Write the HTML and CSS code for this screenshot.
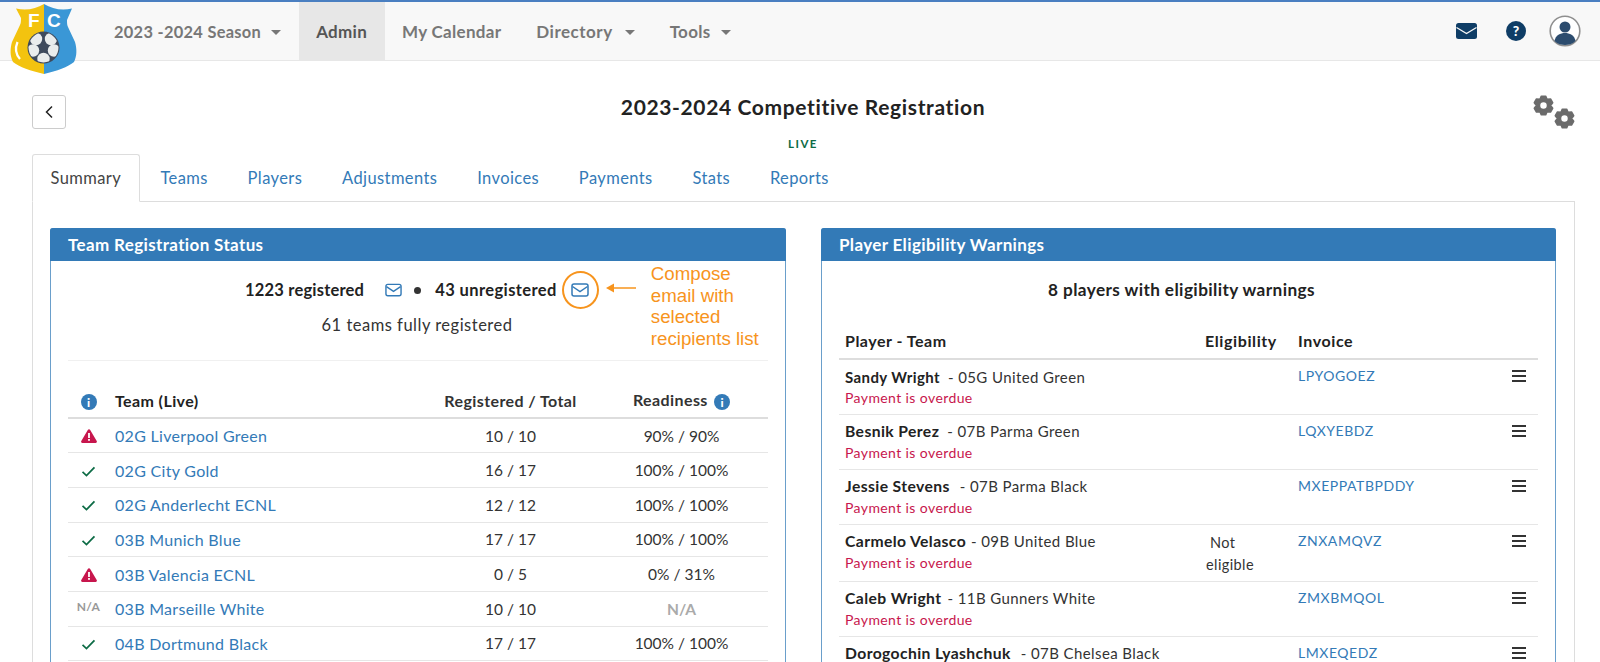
FILE: index.html
```html
<!DOCTYPE html>
<html lang="en">
<head>
<meta charset="utf-8">
<title>2023-2024 Competitive Registration</title>
<link rel="stylesheet" href="styles.css">
</head>
<body>
<svg class="defs" width="0" height="0" aria-hidden="true">
  <symbol id="env" viewBox="0 0 18 14"><rect x="1" y="1" width="16" height="12" rx="2" fill="none" stroke="currentColor" stroke-width="1.5"/><path d="M1.5 3.5 9 8.5l7.500-5" fill="none" stroke="currentColor" stroke-width="1.500"/></symbol>
  <symbol id="chk" viewBox="0 0 16 12"><path d="M1.500 6.500 5.800 10.500 14.500 1.500" fill="none" stroke="currentColor" stroke-width="1.900"/></symbol>
  <symbol id="warn" viewBox="0 0 16 14"><path d="M8 0.300c.5 0 .9.300 1.200.8l6.500 11c.5.800 0 1.800-1 1.800H1.300c-1 0-1.500-1-1-1.800l6.500-11c.3-.5.700-.8 1.200-.8z" fill="#c7164d"/><rect x="7.100" y="4" width="1.800" height="5" fill="#fff"/><rect x="7.100" y="10" width="1.800" height="1.800" fill="#fff"/></symbol>
  <symbol id="gear" viewBox="-11.500 -11.500 23 23"><path fill="currentColor" stroke="currentColor" stroke-width="1.700" stroke-linejoin="round" fill-rule="evenodd" d="M-2.360-10.230H2.360L3.900-6.750 7.680-7.160 10.040-3.070 7.800 0 10.040 3.070 7.680 7.160 3.900 6.750 2.360 10.230H-2.360L-3.900 6.750-7.680 7.160-10.040 3.070-7.800 0-10.040-3.070-7.680-7.160-3.900-6.750zM0-4.400a4.400 4.400 0 1 0 0 8.800 4.400 4.400 0 0 0 0-8.800z"/></symbol>
  <clipPath id="ball"><circle cx="43.500" cy="47.500" r="15"/></clipPath>
</svg>

<header class="navbar">
  <svg class="logo" viewBox="8 2 72 74" aria-hidden="true">
    <path d="M44 4C36 9 26 11 16 8.500L21 18c0 3 0 5-1 7l-8 17c-2 7-2 14 1 20 6 5 18 9 31 12z" fill="#f3c30f"/>
    <path d="M44 4C52 9 62 11 72 8.500L67 20c0 3 0 5 1 7l7 15c2 7 2 14-1 20-6 5-17 9-30 12z" fill="#3a97d6"/>
    <circle cx="43.500" cy="47.500" r="16" fill="#3e4a5c"/>
    <g clip-path="url(#ball)" fill="#e9ecec">
      <circle cx="36" cy="39" r="6.200"/>
      <circle cx="51" cy="39" r="6.200"/>
      <circle cx="33" cy="50.500" r="6.200"/>
      <circle cx="54" cy="50.500" r="6.200"/>
      <circle cx="43.500" cy="59" r="6.200"/>
    </g>
    <path d="M17.500 42c-2.500 6-2 12 2.500 17" fill="none" stroke="#fff" stroke-width="2.300"/>
    <text x="28" y="27" class="logo-letter">F</text>
    <text x="47" y="27" class="logo-letter">C</text>
  </svg>
  <nav class="nav-main">
    <a class="nav-item nav-season">2023 -2024 Season<i class="caret"></i></a>
    <a class="nav-item active">Admin</a>
    <a class="nav-item">My Calendar</a>
    <a class="nav-item nav-dir">Directory<i class="caret"></i></a>
    <a class="nav-item">Tools<i class="caret"></i></a>
  </nav>
  <div class="nav-icons">
    <svg class="ico-mail" viewBox="0 0 21 16" aria-hidden="true"><rect width="21" height="16" rx="2.500" fill="#0f3d66"/><path d="M0.500 4.500 10.500 10.500 20.500 4.500" fill="none" stroke="#f8f8f8" stroke-width="1.300"/></svg>
    <span class="ico-help">?</span>
    <svg class="ico-user" viewBox="0 0 32 32" aria-hidden="true"><circle cx="16" cy="16" r="14.800" fill="#fff" stroke="#8f8f8f" stroke-width="1.600"/><circle cx="16" cy="12" r="5.500" fill="#2c4c6e"/><path d="M5.500 26c1-6 6-8 10.500-8s9.500 2 10.500 8c-3 3-7 4-10.500 4s-7.500-1-10.500-4z" fill="#2c4c6e"/></svg>
  </div>
</header>

<main class="page">
  <div class="title-row">
    <button class="back" aria-label="Back"><svg viewBox="0 0 10 14" aria-hidden="true"><path d="M8 1.500 2.500 7 8 12.500" fill="none" stroke="#222" stroke-width="1.500"/></svg></button>
    <div class="title-block">
      <h1>2023-2024 Competitive Registration</h1>
      <div class="live">LIVE</div>
    </div>
    <div class="gears" aria-hidden="true">
      <svg class="gear-a"><use href="#gear"/></svg>
      <svg class="gear-b"><use href="#gear"/></svg>
    </div>
  </div>

  <div class="tabs">
    <a class="tab active">Summary</a>
    <a class="tab">Teams</a>
    <a class="tab">Players</a>
    <a class="tab">Adjustments</a>
    <a class="tab">Invoices</a>
    <a class="tab">Payments</a>
    <a class="tab">Stats</a>
    <a class="tab">Reports</a>
  </div>

  <div class="tab-body">
    <section class="panel">
      <h2 class="panel-head">Team Registration Status</h2>
      <div class="panel-body">
        <div class="reg-summary">
          <div class="reg-line">
            <b class="reg-first">1223 registered</b>
            <svg class="env env-a"><use href="#env"/></svg>
            <i class="dot"></i>
            <b>43 unregistered</b>
            <span class="env-ring"><svg class="env"><use href="#env"/></svg>
              <span class="callout">
                <svg class="arrow" viewBox="0 0 30 10" aria-hidden="true"><path d="M30 5H6" stroke="#f7941d" stroke-width="1.500"/><path d="M0 5l8-4.500v9z" fill="#f7941d"/></svg>
                <span class="callout-text">Compose<br>email with<br>selected<br>recipients list</span>
              </span>
            </span>
          </div>
          <div class="reg-sub">61 teams fully registered</div>
        </div>
        <table class="grid teams">
          <thead>
            <tr><th class="c-icon"><span class="info">i</span></th><th>Team (Live)</th><th class="ctr">Registered / Total</th><th class="ctr">Readiness <span class="info info-sm">i</span></th></tr>
          </thead>
          <tbody>
            <tr><td class="c-icon"><svg class="warn"><use href="#warn"/></svg></td><td><a>02G Liverpool Green</a></td><td class="ctr">10 / 10</td><td class="ctr">90% / 90%</td></tr>
            <tr><td class="c-icon"><svg class="chk"><use href="#chk"/></svg></td><td><a>02G City Gold</a></td><td class="ctr">16 / 17</td><td class="ctr">100% / 100%</td></tr>
            <tr><td class="c-icon"><svg class="chk"><use href="#chk"/></svg></td><td><a>02G Anderlecht ECNL</a></td><td class="ctr">12 / 12</td><td class="ctr">100% / 100%</td></tr>
            <tr><td class="c-icon"><svg class="chk"><use href="#chk"/></svg></td><td><a>03B Munich Blue</a></td><td class="ctr">17 / 17</td><td class="ctr">100% / 100%</td></tr>
            <tr><td class="c-icon"><svg class="warn"><use href="#warn"/></svg></td><td><a>03B Valencia ECNL</a></td><td class="ctr">0 / 5</td><td class="ctr">0% / 31%</td></tr>
            <tr><td class="c-icon na">N/A</td><td><a>03B Marseille White</a></td><td class="ctr">10 / 10</td><td class="ctr na-b">N/A</td></tr>
            <tr><td class="c-icon"><svg class="chk"><use href="#chk"/></svg></td><td><a>04B Dortmund Black</a></td><td class="ctr">17 / 17</td><td class="ctr">100% / 100%</td></tr>
          </tbody>
        </table>
      </div>
    </section>

    <section class="panel">
      <h2 class="panel-head">Player Eligibility Warnings</h2>
      <div class="panel-body">
        <div class="warn-summary">8 players with eligibility warnings</div>
        <table class="grid players">
          <thead>
            <tr><th class="c-player">Player - Team</th><th class="c-elig">Eligibility</th><th class="c-inv">Invoice</th><th class="c-menu"></th></tr>
          </thead>
          <tbody>
            <tr><td class="who"><b class="tight">Sandy Wright</b><span class="t">- 05G United Green</span><div class="overdue">Payment is overdue</div></td><td></td><td><a>LPYOGOEZ</a></td><td class="c-menu"><i class="bars"></i></td></tr>
            <tr><td class="who"><b>Besnik Perez</b><span class="t">- 07B Parma Green</span><div class="overdue">Payment is overdue</div></td><td></td><td><a>LQXYEBDZ</a></td><td class="c-menu"><i class="bars"></i></td></tr>
            <tr><td class="who"><b>Jessie Stevens</b><span class="t t10">- 07B Parma Black</span><div class="overdue">Payment is overdue</div></td><td></td><td><a>MXEPPATBPDDY</a></td><td class="c-menu"><i class="bars"></i></td></tr>
            <tr class="row-tall"><td class="who"><b>Carmelo Velasco</b><span class="t t5">- 09B United Blue</span><div class="overdue">Payment is overdue</div></td><td class="not-elig"><span class="not">Not</span><br>eligible</td><td><a>ZNXAMQVZ</a></td><td class="c-menu"><i class="bars"></i></td></tr>
            <tr><td class="who"><b>Caleb Wright</b><span class="t t6">- 11B Gunners White</span><div class="overdue">Payment is overdue</div></td><td></td><td><a>ZMXBMQOL</a></td><td class="c-menu"><i class="bars"></i></td></tr>
            <tr><td class="who"><b>Dorogochin Lyashchuk</b><span class="t t10">- 07B Chelsea Black</span></td><td></td><td><a>LMXEQEDZ</a></td><td class="c-menu"><i class="bars"></i></td></tr>
          </tbody>
        </table>
      </div>
    </section>
  </div>
</main>
</body>
</html>
```

FILE: styles.css
```css
* { box-sizing: border-box; }
html, body { margin: 0; height: 662px; overflow: hidden; background: #fff; }
body { font-family: Lato, "Noto Sans", sans-serif; font-size: 15px; color: #222; letter-spacing: 0.4px; }
.defs { position: absolute; }
a { color: #337ab7; }

.navbar { height: 61px; display: flex; align-items: center; background: #f8f8f8; border-top: 2px solid #4a7fc1; border-bottom: 1px solid #e7e7e7; position: relative; }
.logo { position: absolute; left: 8px; top: 0; width: 72px; height: 74px; z-index: 2; }
.logo-letter { font: 700 19px "Liberation Sans", sans-serif; fill: #fff; letter-spacing: 0; }
.nav-main { display: flex; height: 100%; margin-left: 96.500px; }
.nav-item { display: flex; align-items: center; padding: 0 17.500px; font-size: 17px; font-weight: 700; color: #777; letter-spacing: 0.3px; }
.nav-season { font-size: 16.400px; }
.nav-dir { letter-spacing: 0.5px; }
.nav-item.active { background: #e7e7e7; color: #555; }
.caret { width: 0; height: 0; margin-left: 10px; margin-top: 2px; border-left: 5px solid transparent; border-right: 5px solid transparent; border-top: 5px solid #777; }
.nav-dir .caret { margin-left: 12px; }
.nav-icons { margin-left: auto; display: flex; align-items: center; padding-right: 19px; }
.ico-mail { width: 21px; height: 16px; }
.ico-help { width: 20px; height: 20px; margin-left: 29px; border-radius: 50%; background: #0f3d66; color: #fff; font-size: 14px; font-weight: 900; line-height: 20px; text-align: center; letter-spacing: 0; }
.ico-user { width: 32px; height: 32px; margin-left: 23px; }

.page { padding: 0 25px 0 32px; }
.title-row { height: 93px; position: relative; display: flex; justify-content: center; }
.back { position: absolute; left: 0; top: 34px; width: 34px; height: 34px; padding: 0; background: #fff; border: 1px solid #ccc; border-radius: 3px; display: flex; align-items: center; justify-content: center; }
.back svg { width: 10px; height: 14px; }
.title-block { text-align: center; padding-top: 33px; margin-left: -1px; }
h1 { margin: 0; font-size: 21px; line-height: 26px; font-weight: 700; color: #222; letter-spacing: 0.63px; }
.live { margin-top: 17px; font-size: 11.500px; line-height: 14px; font-weight: 700; color: #0c6b45; letter-spacing: 1.500px; }
.gears { position: absolute; right: 0; top: 34px; width: 42px; height: 34px; color: #6b6b6b; }
.gear-a { position: absolute; left: 0; top: 0; width: 21px; height: 21px; }
.gear-b { position: absolute; left: 21px; top: 13px; width: 21px; height: 21px; }

.tabs { display: flex; height: 48px; margin-bottom: -1px; position: relative; }
.tab { display: flex; align-items: center; padding: 0 18px; font-size: 16.500px; color: #337ab7; border: 1px solid transparent; margin-right: 1.800px; letter-spacing: 0.4px; }
.tab:first-child { padding: 0 17.500px; }
.tab.active { color: #444; background: #fff; border-color: #ddd #ddd #fff; border-radius: 3px 3px 0 0; }

.tab-body { border: 1px solid #ddd; padding: 26px 18px 0 17px; display: grid; grid-template-columns: 736px 735px; gap: 35px; height: 520px; }
.panel { border: 1px solid #6a9fcb; border-bottom: 0; border-radius: 3px 3px 0 0; }
.panel-head { margin: -1px -1px 0; height: 33px; line-height: 33px; padding: 0 18px; background: #337ab7; color: #fff; font-size: 17px; font-weight: 700; letter-spacing: 0.36px; border-radius: 3px 3px 0 0; }
.panel-body { padding: 0 17px; }

.reg-summary { height: 100px; padding-top: 12px; border-bottom: 1px solid #f0f0f0; text-align: center; }
.reg-line { display: flex; align-items: center; height: 34px; padding-left: 177px; }
.reg-line b { font-size: 16.500px; font-weight: 700; color: #222; }
.reg-line b.reg-first { letter-spacing: 0.2px; }
.env { width: 18px; height: 14px; color: #337ab7; display: block; }
.env-a { margin: 0 11.500px 0 21px; width: 17px; }
.dot { width: 7px; height: 7px; border-radius: 50%; background: #333; margin-right: 14.500px; }
.env-ring { position: relative; flex: none; width: 37px; height: 38px; margin-left: 5px; border: 2px solid #f7941d; border-radius: 50%; display: flex; align-items: center; justify-content: center; }
.callout { position: absolute; left: 42px; top: -10px; width: 170px; display: flex; }
.arrow { position: absolute; left: 0; top: 19.500px; width: 30px; height: 10px; }
.callout-text { margin-left: 45px; font: 18.700px/21.500px "Liberation Sans", Arial, sans-serif; color: #f7941d; text-align: left; white-space: nowrap; letter-spacing: 0; }
.reg-sub { margin-top: 7px; font-size: 16.500px; line-height: 22px; color: #333; margin-right: 2px; letter-spacing: 0.5px; }

.grid { width: 100%; border-collapse: collapse; font-size: 15px; }
.grid th { font-size: 16px; font-weight: 700; color: #222; text-align: left; border-bottom: 2px solid #ddd; }
.grid td { border-bottom: 1px solid #e6e6e6; }
.ctr { text-align: center !important; }
.teams { margin-top: 22px; table-layout: fixed; }
.teams th { height: 35px; padding: 0; }
.teams td { height: 34.700px; padding: 0; font-size: 16px; }
.teams td.ctr { font-size: 15.500px; letter-spacing: 0; color: #333; }
.teams a { font-size: 16px; letter-spacing: 0.3px; }
.teams th.ctr { color: #333; }
.c-icon { width: 47px; text-align: center !important; padding-right: 6px !important; }
.teams th:nth-child(2) { width: 311px; }
.teams th:nth-child(3) { width: 169px; }
.info { display: inline-flex; width: 16px; height: 16px; align-items: center; justify-content: center; border-radius: 50%; background: #337ab7; color: #fff; font-size: 12px; font-weight: 900; letter-spacing: 0; vertical-align: -1px; }
.info-sm { margin-left: 2px; }
.warn { width: 16px; height: 14px; vertical-align: -1px; }
.chk { width: 15px; height: 11px; color: #0c6b45; }
.na { font-size: 12px !important; font-weight: 700; color: #999; padding-bottom: 4px !important; }
.teams td.na-b { font-weight: 700; color: #aaa; }

.warn-summary { height: 63px; padding: 16px 14px 0 0; text-align: center; font-size: 17.200px; font-weight: 700; color: #222; line-height: 25px; }
.players { table-layout: fixed; }
.players th { height: 35px; padding: 0 0 2px 5px; font-size: 16px; letter-spacing: 0.6px; }
.players th.c-player { padding-left: 6px; letter-spacing: 0.5px; }
.players td { padding: 5.500px 0 0 5px; vertical-align: top; font-size: 15px; height: 55px; line-height: 22px; color: #333; }
.players td.who { padding-left: 6px; }
.players a { display: block; margin-top: 1.500px; font-size: 14px; line-height: 18px; letter-spacing: 0.55px; }
.players b { font-weight: 700; font-size: 15.700px; color: #222; }
.players b.tight { font-size: 15px; }
.t { margin-left: 8px; }
.t5 { margin-left: 5px; }
.t6 { margin-left: 6px; }
.t10 { margin-left: 10px; }
.row-tall td { height: 57px; }
.c-player { width: 361px; }
.c-elig { width: 93px; }
.c-inv { width: 210px; }
.overdue { margin-top: 1.500px; color: #c7164d; font-size: 14px; line-height: 18px; }
.players td.not-elig { padding: 7px 0 0 6px; font-size: 14.500px; }
.not { margin-left: 4px; }
.bars { display: block; width: 14px; height: 12px; margin: 4.500px 12px 0 auto; border-top: 2px solid #333; border-bottom: 2px solid #333; position: relative; }
.bars::after { content: ""; position: absolute; left: 0; right: 0; top: 3px; height: 2px; background: #333; }
```
